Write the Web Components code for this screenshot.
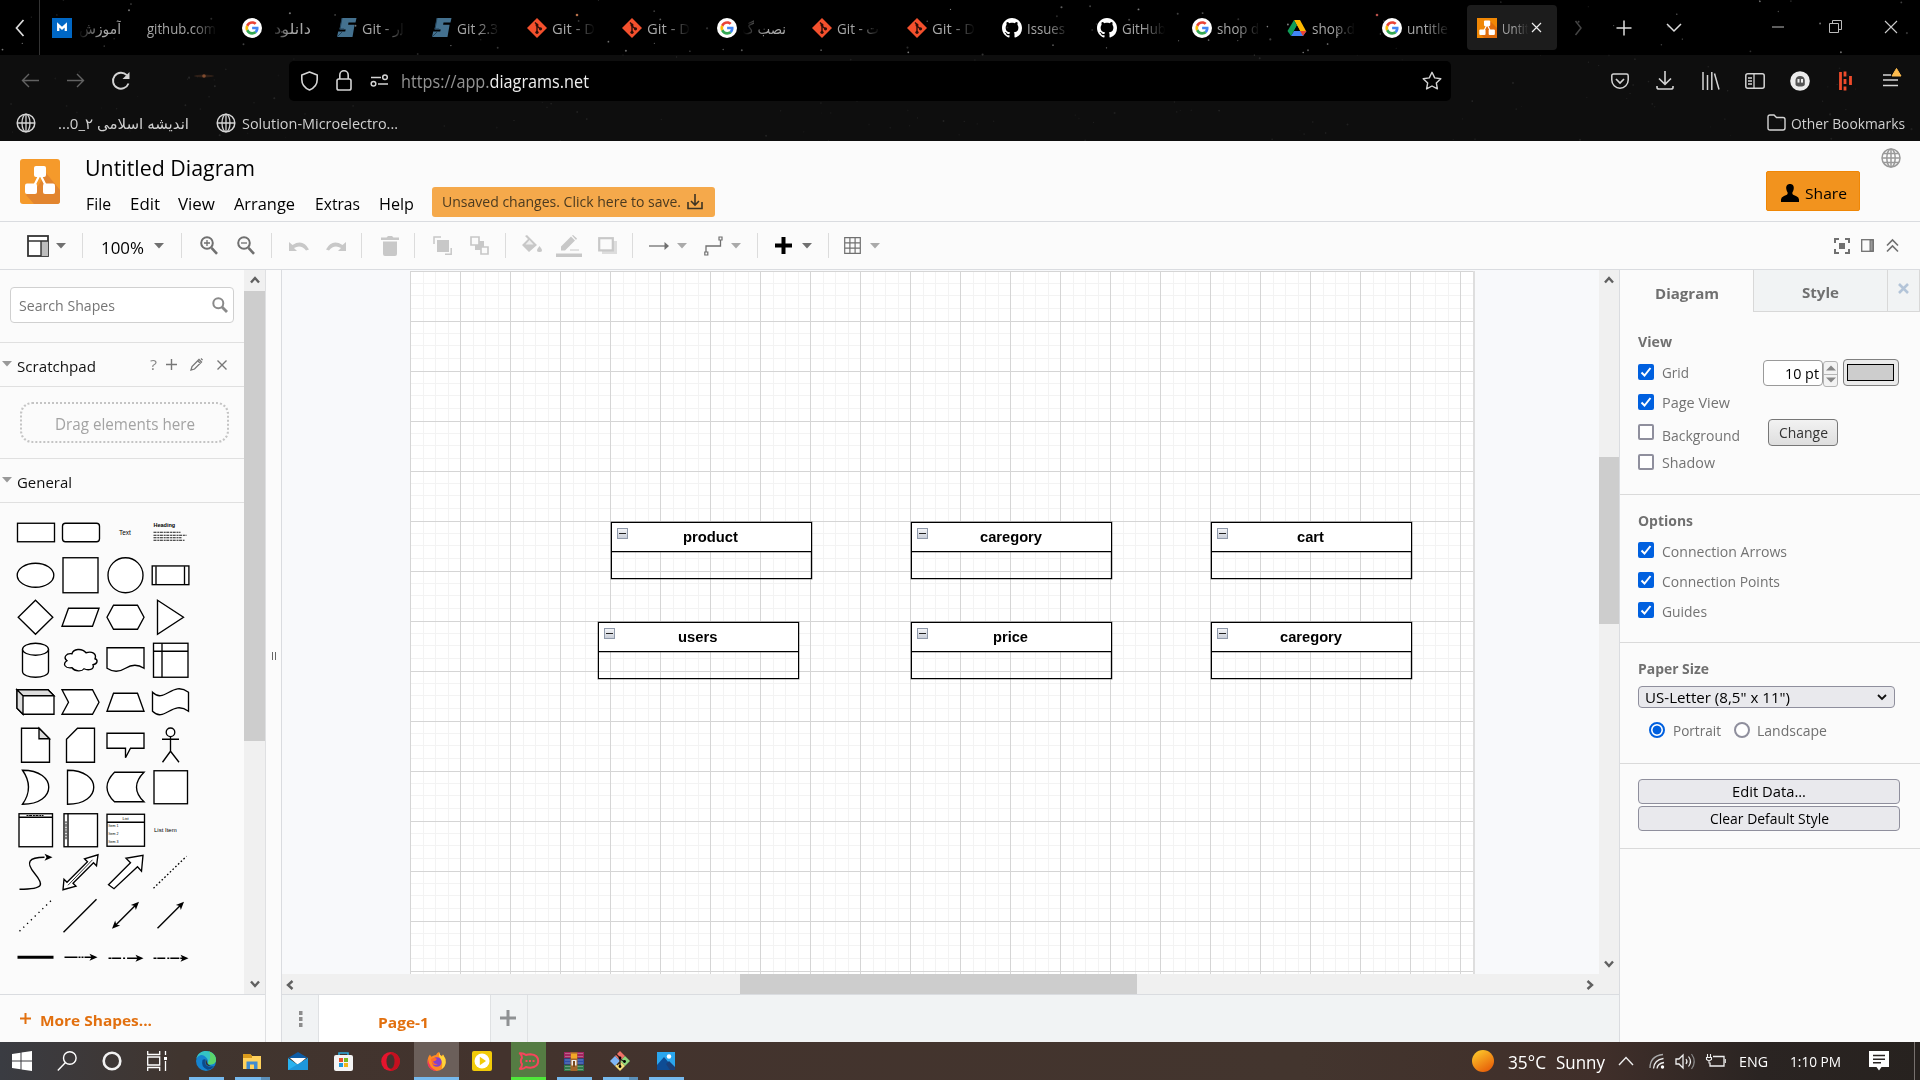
<!DOCTYPE html>
<html lang="en">
<head>
<meta charset="utf-8">
<title>Untitled Diagram</title>
<style>
html,body{margin:0;padding:0;width:1920px;height:1080px;overflow:hidden;background:#fbfbfb;font-family:"Open Sans","Noto Sans","DejaVu Sans",sans-serif}
</style>
</head>
<body>
<desktop-screen></desktop-screen>
<script>
const define = (name, css, html) => customElements.define(name, class extends HTMLElement {
  connectedCallback() {
    if (this.shadowRoot) return;
    const root = this.attachShadow({ mode: 'open' });
    root.innerHTML = `<style>*{box-sizing:border-box}${css}</style>` + (typeof html === 'function' ? html(this) : html);
  }
});

/* Text run whose advance width is pinned with the w attribute. */
customElements.define('ui-text', class extends HTMLElement {
  connectedCallback() {
    if (this.shadowRoot) return;
    const w = +this.getAttribute('w'), s = this.getAttribute('s') || 15, b = this.getAttribute('b') || 400;
    const rtl = this.hasAttribute('rtl') ? ' dir="rtl"' : '';
    this.attachShadow({ mode: 'open' }).innerHTML =
      `<style>:host{display:block;flex:none;white-space:pre;line-height:24px;height:24px;font-size:${s}px;font-weight:${b};${w ? `width:${w}px` : ''}}
      span{display:inline-block;transform-origin:0 50%}</style><span${rtl}><slot></slot></span>`;
    const el = this.shadowRoot.querySelector('span');
    const n = el.getBoundingClientRect().width;
    if (w && n) el.style.transform = `scaleX(${w / n})`;
  }
});

const G = '<circle cx="10" cy="10" r="10" fill="#fff"/><g transform="translate(3.4,3.2) scale(.28)"><path fill="#ea4335" d="M24 9.5c3.54 0 6.71 1.22 9.21 3.6l6.85-6.85C35.9 2.38 30.47 0 24 0 14.62 0 6.51 5.38 2.56 13.22l7.98 6.19C12.43 13.72 17.74 9.5 24 9.5z"/><path fill="#4285f4" d="M46.98 24.55c0-1.57-.15-3.09-.38-4.55H24v9.02h12.94c-.58 2.96-2.26 5.48-4.78 7.18l7.73 6c4.51-4.18 7.09-10.36 7.09-17.65z"/><path fill="#fbbc05" d="M10.53 28.59c-.48-1.45-.76-2.99-.76-4.59s.27-3.14.76-4.59l-7.98-6.19C.92 16.46 0 20.12 0 24c0 3.88.92 7.54 2.56 10.78l7.97-6.19z"/><path fill="#34a853" d="M24 48c6.48 0 11.93-2.13 15.89-5.81l-7.73-6c-2.15 1.45-4.92 2.3-8.16 2.3-6.26 0-11.57-4.22-13.47-9.91l-7.98 6.19C6.51 42.62 14.62 48 24 48z"/></g>';
const nodesGlyph = '<path d="M20 15L13.5 28M20 15L26.5 28" stroke="#fff" stroke-width="2.2" fill="none"/><rect x="14" y="7" width="12" height="11" rx="2" fill="#fff"/><rect x="5" y="24.5" width="12" height="10.5" rx="2" fill="#fff"/><rect x="23" y="24.5" width="12" height="10.5" rx="2" fill="#fff"/>';
const st = (c, w = 1.5) => `fill="none" stroke="${c}" stroke-width="${w}"`;
const L = '#d4d4d4', T = '#707070', K = '#c8c8c8';
/* name: [width, height, markup] */
const ICONS = {
  /* favicons */
  m: [20,20,'<rect width="20" height="20" fill="#0067c5"/><path d="M6.2 13V6.8l3.8 3.6 3.8-3.6V13" fill="none" stroke="#fff" stroke-width="2.3"/>'],
  g: [20,20,G],
  s: [20,20,'<path d="M5 0h14.500l-1 4.500h-7l-.4 2.200h6.500L15.500 19H0l1.200-5.400h7l.5-2H2.500z" fill="#44718f"/><path d="M5 0l-2 11h4M0 19l5-5" stroke="#23435a" fill="none"/>'],
  git: [20,20,'<path d="M10 0L20 10 10 20 0 10z" fill="#f4502d"/><path d="M8 4.500l2 2v7.500M10 8l3.500 3" '+st('#2b0e08',1.4)+'/><circle cx="10" cy="14.300" r="1.600" fill="#2b0e08"/><circle cx="13.500" cy="10.800" r="1.600" fill="#2b0e08"/><circle cx="10" cy="7" r="1.500" fill="#2b0e08"/>'],
  gh: [20,20,'<path transform="scale(1.25)" fill="#fff" d="M8 0C3.580 0 0 3.580 0 8c0 3.540 2.290 6.530 5.470 7.590.4.070.55-.17.55-.38 0-.19-.01-.82-.01-1.490-2.010.37-2.530-.49-2.690-.94-.09-.23-.48-.94-.82-1.130-.28-.15-.68-.52-.01-.53.63-.01 1.080.58 1.230.82.72 1.210 1.870.87 2.330.66.07-.52.28-.87.51-1.070-1.780-.2-3.640-.89-3.640-3.950 0-.87.31-1.590.82-2.150-.08-.2-.36-1.020.08-2.120 0 0 .67-.21 2.200.82.64-.18 1.320-.27 2-.27s1.360.09 2 .27c1.530-1.040 2.200-.82 2.200-.82.44 1.100.16 1.920.08 2.120.51.56.82 1.270.82 2.150 0 3.070-1.870 3.750-3.650 3.950.29.25.54.73.54 1.480 0 1.070-.01 1.930-.01 2.200 0 .21.15.46.55.38A8.010 8.010 0 0 0 16 8c0-4.420-3.580-8-8-8z"/>'],
  drive: [20,20,'<path d="M7 2h6l6 11h-6z" fill="#ffba00"/><path d="M7 2l3 5.500L4 18l-3.500-5z" fill="#0f9d58"/><path d="M4 18l3-5h12.500L16 18z" fill="#4285f4"/><path d="M16 18l-3-5h6.500z" fill="#ea4335"/><path d="M10 7.500L7 13h6z" fill="#000"/>'],
  diag: [20,20,'<rect width="20" height="20" fill="#f08705"/><path d="M13 3l7 7v10H7l-4-4 5-5z" fill="#df6c0c"/><g transform="translate(-.3,-1.2) scale(.52)">'+nodesGlyph+'</g>'],
  /* browser chrome */
  left: [10,18,`<path d="M8.500 1L1.500 9l7 8" ${st('#ddd',1.7)}/>`],
  right: [9,16,`<path d="M1.500 1L7 8l-5.500 7" ${st('#444',1.5)}/>`],
  plus: [16,16,`<path d="M8 .5v15M.5 8h15" ${st('#ddd')}/>`],
  down: [16,9,`<path d="M1 1l7 7 7-7" ${st('#ddd')}/>`],
  min: [12,2,`<path d="M0 1h12" ${st('#bbb',1)}/>`],
  restore: [13,13,`<path d="M.5 3.500h9v9h-9zM3.500 3V.5h9v9H10" ${st('#bbb',1)}/>`],
  x: [14,14,`<path d="M1 1l12 12M13 1L1 13" ${st('#ccc',1.1)}/>`],
  xs: [11,11,`<path d="M1 1l9 9M10 1l-9 9" ${st('#eee',1.2)}/>`],
  back: [18,15,`<path d="M18 7.500H1.500M8 1L1.500 7.500 8 14" ${st('#626262',1.4)}/>`],
  fwd: [18,15,`<path d="M0 7.500h16.500M10 1l6.500 6.500L10 14" ${st('#626262',1.4)}/>`],
  reload: [20,20,`<path d="M17.500 12.500a8 8 0 1 1-1.700-8.300" ${st(L,1.9)}/><path d="M18.500 1v7h-7z" fill="${L}"/>`],
  shield: [19,20,`<path d="M9.500 1l7.700 3v4.500c0 5-3 8.500-7.700 10.500-4.700-2-7.700-5.500-7.700-10.500V4z" ${st(L,1.6)} stroke-linejoin="round"/>`],
  lock: [16,21,`<rect x="1" y="9" width="14" height="11" rx="1.800" ${st(L,1.6)}/><path d="M3.800 9V5a4.200 4.200 0 0 1 8.400 0v4" ${st(L,1.6)}/>`],
  perm: [19,13,`<path d="M1 3.500h10M8 10h10" ${st(L,1.6)}/><circle cx="15" cy="3.200" r="2.300" ${st(L)}/><circle cx="3.500" cy="9.800" r="2.300" ${st(L)}/>`],
  star: [20,19,`<path d="M10 1.300l2.700 5.600 6.100.8-4.500 4.200 1.100 6L10 15l-5.400 2.900 1.100-6L1.200 7.700l6.100-.8z" ${st(L,1.4)} stroke-linejoin="round"/>`],
  pocket: [18,16,`<path d="M2.500 1h13q1.700 0 1.700 1.700V7a8.200 8.200 0 0 1-16.400 0V2.700Q.8 1 2.500 1z" ${st(L)}/><path d="M5 6l4 4 4-4" ${st(L,1.7)}/>`],
  dl: [18,19,`<path d="M9 0v13M3 7.500L9 13.300l6-5.800M1 15v1.500Q1 18 3 18h12q2 0 2-1.500V15" ${st(L,1.6)}/>`],
  lib: [18,18,`<path d="M1 0v18M5.500 3v15M9.800 0v18M12.500 1.500l4.500 16" ${st(L)}/>`],
  side: [20,16,`<rect x=".8" y=".8" width="18.400" height="14.400" rx="2" ${st(L)}/><path d="M9 1v14M3 5h4M3 8h4M3 11h4" ${st(L,1.3)}/>`],
  ghost: [20,20,'<circle cx="10" cy="10" r="9.800" fill="#ececec"/><path d="M5.500 13.500V9a4.700 4.700 0 0 1 9.300 0v4.500q-.3 2-4.600 2t-4.700-2z" fill="#555"/><rect x="7.500" y="8" width="2" height="3.600" fill="#eee"/><rect x="11" y="8" width="2" height="3.600" fill="#eee"/>'],
  red: [14,20,'<path d="M1.500 1v18M6 .5v5M6 8v5M6 15.500v4M11.500 5v9" fill="none" stroke="#ee4b2b" stroke-width="2.800"/>'],
  menu: [20,20,`<path d="M1 7h8M1 12h15M1 17.500h15" ${st(L,1.5)}/><path d="M14.500.5l4.500 7.500h-9z" fill="#ffbd4f" stroke="#ffbd4f"/>`],
  globe: [20,20,`<circle cx="10" cy="10" r="8.800" ${st(L)}/><ellipse cx="10" cy="10" rx="4" ry="8.800" ${st(L,1.3)}/><path d="M1 10h18M10 1v18" ${st(L,1.3)}/>`],
  globe2: [20,20,`<circle cx="10" cy="10" r="9" ${st('#999',1.5)}/><ellipse cx="10" cy="10" rx="4.200" ry="9" ${st('#999',1.5)}/><path d="M10 1v18M1 10h18M2.500 5.500h15M2.500 14.500h15" ${st('#999',1.5)}/>`],
  folder: [19,17,`<path d="M1 3Q1 1 3 1h4l2.500 2.500H16Q18 3.500 18 5.500v8.500q0 2-2 2H3q-2 0-2-2z" ${st(L,1.4)}/>`],
  /* editor */
  logo: [40,45,'<rect width="40" height="45" rx="3" fill="#f59a2b"/><path d="M26 14l14 17v11q0 3-3 3H14L6 36l12-9z" fill="#e2852f"/>'+nodesGlyph],
  save: [16,16,`<path d="M8 0v10.500M4 7l4 4 4-4M1 8v6.500h14V8" ${st('#3d3423',1.6)}/>`],
  person: [18,18,'<path d="M9 0c3 0 4.200 2.300 3.700 5-.3 2-1 2.600-1.400 3.700 0 1.800 1 2.300 3.700 3.200Q18 13 18 15.500V18H0v-2.500Q0 13 3 11.900c2.700-.9 3.700-1.400 3.700-3.200C6.300 7.600 5.600 7 5.300 5 4.800 2.300 6 0 9 0z"/>'],
  panel: [22,22,'<rect x="1" y="1" width="20" height="20" fill="#fff" stroke="#333" stroke-width="1.800"/><path d="M14 6h7v15h-7z" fill="#bdbdbd"/><path d="M1 6h20M14 6v15" stroke="#333" stroke-width="1.400"/>'],
  car: [10,6,'<path d="M0 0h10L5 5.500z" fill="#707070"/>'],
  carl: [10,6,'<path d="M0 0h10L5 5.500z" fill="#aaa"/>'],
  zin: [18,19,`<circle cx="7" cy="7" r="5.800" ${st(T,2)}/><path d="M11.500 11.800l5.500 6" ${st(T,2.6)}/><path d="M7 4v6M4 7h6" ${st(T,1.3)}/>`],
  zout: [18,19,`<circle cx="7" cy="7" r="5.800" ${st(T,2)}/><path d="M11.500 11.800l5.500 6" ${st(T,2.6)}/><path d="M4 7h6" ${st(T,1.3)}/>`],
  undo: [20,12,`<path d="M0 2v9h8L5 8q7-4 12 2.500l3-1Q14-1.500 3.500 5z" fill="${K}"/>`],
  redo: [20,12,`<path d="M20 2v9h-8l3-3q-7-4-12 2.500l-3-1Q6-1.500 16.500 5z" fill="${K}"/>`],
  trash: [18,20,`<path d="M0 1.500h5.500L7 0h4l1.500 1.500H18V4H0zM2 5.500h14V18q0 2-2 2H4q-2 0-2-2z" fill="${K}"/>`],
  front: [19,19,`<path d="M4 4h12v12H4z" fill="${K}"/><path d="M1 8V1h7M18.200 12v6.200H12" ${st(K,1.5)}/>`],
  bck: [19,19,`<path d="M5 5h9v9H5z" fill="${K}"/><path d="M1 1h8v8H1zM11 11h7v7h-7z" fill="#fbfbfb" stroke="${K}" stroke-width="1.700"/>`],
  fill: [20,19,`<path d="M3 1l2-1 10 10-8 7-7-7 6-6z" fill="${K}"/><path d="M3.500 9.500L7.500 5l4 4.500z" fill="#fbfbfb" opacity=".75"/><path d="M17.500 11q5 6 0 6t0-6z" fill="${K}"/>`],
  pen: [26,22,`<path d="M0 18.500h26V22H0z" fill="${K}"/><path d="M5 15.500v-4L15 1.500l4 4-10 10zM16 .5l1-.5 4 3.500-1 1.500z" fill="${K}"/><path d="M14 15h9" stroke="${K}"/>`],
  shadow: [19,17,`<path d="M4 4h15v13H4z" fill="#ddd"/><rect x="1.200" y="1.200" width="13.600" height="12.200" fill="#fbfbfb" stroke="${K}" stroke-width="2.200"/>`],
  arr: [20,8,`<path d="M0 4h16" ${st(T,1.3)}/><path d="M15.500 0l4.500 4-4.500 4z" fill="${T}"/>`],
  conn: [20,20,`<path d="M2 16v-6h14.500V4" ${st(T,1.3)}/><path d="M.8 16h3v3h-3zM15 1h3v3h-3z" ${st(T,1.2)}/>`],
  bold: [17,17,'<path d="M6.500 0h4v6.500H17v4h-6.500V17h-4v-6.500H0v-4h6.500z" fill="#000"/>'],
  grid: [17,17,`<path d="M.7.7h15.600v15.600H.7zM5.900 1v15M11.100 1v15M1 5.900h15M1 11.100h15" ${st(T,1.2)}/>`],
  fit: [16,16,`<path d="M1 5V1h4M11 1h4v4M15 11v4h-4M5 15H1v-4" ${st(T,2)}/><path d="M5 5h6v6H5z" fill="${T}"/>`],
  fmt: [13,13,`<rect x=".7" y=".7" width="11.600" height="11.600" ${st(T,1.3)}/><path d="M9 1h3v11H9z" fill="#999" stroke="${T}"/>`],
  coll: [13,13,`<path d="M1 6.500L6.500 1 12 6.500M1 12.500L6.500 7l5.500 5.500" ${st(T,1.6)}/>`],
  find: [16,16,`<circle cx="6.300" cy="6.300" r="5" ${st('#8a8a8a',2)}/><path d="M10 10l5 5" ${st('#8a8a8a',2.8)}/>`],
  tri: [10,6,'<path d="M0 0h10L5 5.500z" fill="#999"/>'],
  plus2: [11,11,`<path d="M5.500 0v11M0 5.500h11" ${st('#777',1.4)}/>`],
  pencil: [13,13,`<path d="M1 12l1-3.500L9 1.500l2.500 2.500-7 7zM8 3l2.500 2.500M11 .5l1.600 1.600" ${st('#777',1.3)}/>`],
  x2: [10,10,`<path d="M.5.5l9 9M9.500.5l-9 9" ${st('#777',1.4)}/>`],
  op: [11,11,`<path d="M5.500 0v11M0 5.500h11" ${st('#e2700f',2)}/>`],
  gp: [16,16,`<path d="M8 0v16M0 8h16" ${st('#8f9193',3)}/>`],
  dots: [4,16,'<path d="M0 0h3.500v4H0zM0 6h3.500v4H0zM0 12h3.500v4H0z" fill="#8c8c8c"/>'],
  handle: [4,8,'<path d="M.5 0v8M3.500 0v8" stroke="#666"/>'],
  su: [10,8,'<path d="M1 6.500l4-4.500 4 4.500" fill="none" stroke="#606060" stroke-width="2.400"/>'],
  sd: [10,8,'<path d="M1 1.500L5 6l4-4.500" fill="none" stroke="#606060" stroke-width="2.400"/>'],
  sl: [8,10,'<path d="M6.500 1L2 5l4.500 4" fill="none" stroke="#606060" stroke-width="2.400"/>'],
  sr: [8,10,'<path d="M1.500 1L6 5 1.500 9" fill="none" stroke="#606060" stroke-width="2.400"/>'],
  bx: [11,11,`<path d="M1 1l9 9M10 1l-9 9" ${st('#b3c4d8',2.6)}/>`],
  chev: [10,7,`<path d="M1 1l4 4 4-4" ${st('#111',1.8)}/>`],
  /* taskbar */
  win: [20,20,'<path d="M0 3l8.500-1.300v7.800H0zM9.500 1.500L20 0v9.500H9.500zM0 10.500h8.500v7.800L0 17zM9.500 10.500H20V20L9.500 18.500z" fill="#fff"/>'],
  search: [20,20,`<circle cx="12.800" cy="7" r="6.300" ${st('#fff',1.4)}/><path d="M8.500 11.500L.8 19.500" ${st('#fff',1.4)}/>`],
  cort: [20,20,`<circle cx="10" cy="10" r="8.300" ${st('#f2f2f2',2.6)}/>`],
  task: [20,20,`<path d="M.7 0v3.500h12V0M.7 20v-3.500h12V20M.7 6h12v8H.7zM18.500 0v4M18.500 10v10" ${st('#fff',1.3)}/><path d="M17 6h3v3h-3z" fill="#fff"/>`],
  edge: [20,20,'<circle cx="10" cy="10" r="10" fill="#1583cf"/><path d="M.3 8C2-3 19-2.500 20 8c.3 4-3 6-7 5.500-2-.3-1.500-1.500-1-2.500C13 8 5-1 .3 8z" fill="#35c4c4"/><path d="M13 .5c5 1.500 7.500 6 6.900 9.500-.7 3-4.500 4-7 3.300L12 12q4-6 1-11.500z" fill="#5bd66a"/><path d="M6.500 9q-2 7 5 9.800 4-.3 6.500-3.800-7 2.500-9-3-.5-2 .5-3.500-1.500-.7-3 .5z" fill="#0c4a8c"/><path d="M10 8.200Q8 13 12.500 15l4 .2q-5-.7-5.500-4.200z" fill="#3a2f2c"/>'],
  expl: [18,17,'<path d="M0 1h7l2 2h9v13H0z" fill="#ffd15c"/><path d="M0 1h7l2 2v2H0z" fill="#d99a1b"/><path d="M3.500 8.500h11V16H11v-4.500H7V16H3.500z" fill="#3f8bd0"/>'],
  mail: [20,18,'<path d="M0 6L10 0l10 6z" fill="#0d5ca5"/><path d="M2 6h16l-8 7z" fill="#fff"/><path d="M0 6l10 7 10-7v12H0z" fill="#29b2ef"/><path d="M0 18L20 6v12z" fill="#1d97dc"/>'],
  store: [19,19,'<path d="M5 3V1h9v2" fill="none" stroke="#2da9dc" stroke-width="1.600"/><rect y="3" width="19" height="16" rx="2" fill="#f4f4f4"/><path d="M5 6h4v4H5z" fill="#e8502a"/><path d="M10 6h4v4h-4z" fill="#79b821"/><path d="M5 11h4v4H5z" fill="#1c9ade"/><path d="M10 11h4v4h-4z" fill="#f4b616"/>'],
  opera: [19,19,'<ellipse cx="9.500" cy="9.500" rx="9.300" ry="9.400" fill="#e5142d"/><path d="M9.500 0Q19 1 18.800 9.500T9.500 19z" fill="#c4101f"/><ellipse cx="9.500" cy="9.500" rx="4" ry="7.300" fill="#42322e"/>'],
  ff: [19,19,'<path d="M9.500 19A9 9 0 0 1 .5 10Q.5 5 3 2.500q.5 1.500 1.500 2.200Q7 3 9 3q1-2.300 3-3 .5 3 3 4l1-1.500q3 4 2.700 8A9 9 0 0 1 9.500 19z" fill="#ff8a22"/><path d="M12 0q.5 3 3 4.500l1-2q3 4 2.700 8-.5 4-4 6.500 1.500-6-1-9.500T12 0z" fill="#ffd43a"/><path d="M1 7q1 9 9 12Q2 18.500.6 12z" fill="#f2365c"/><circle cx="9.800" cy="10" r="4.800" fill="#8540c9"/><path d="M4 7q4-2 6 0-1 2-4 2.500 1 3 5 2.500-6 3.500-7-5z" fill="#ff6a2a"/>'],
  play: [20,20,'<rect width="20" height="20" rx="2" fill="#f2cb08"/><circle cx="10" cy="10" r="7.500" fill="#fff"/><path d="M7.800 5.800L14 10l-6.200 4.200z" fill="#f2cb08"/>'],
  rocket: [20,18,`<path d="M.8 1.200Q4.500.8 7 3q2-.7 4.500-.7Q19.200 3 19.200 9t-7.700 6.700Q9 15.700 7 15q-2.500 2.300-6.200 1.800Q3.300 14.500 3 12.200 1.800 10.800 1.800 9T3 5.800Q3.300 3.500.8 1.200z" ${st('#f5455c',2)} stroke-linejoin="round"/><path d="M6.500 8h2v2h-2zM10 8h2v2h-2zM13.500 8h2v2h-2z" fill="#f5455c"/>`],
  rar: [20,19,'<path d="M0 0h20v6H0z" fill="#a3245f"/><path d="M0 6.500h20v6H0z" fill="#2c4fa8"/><path d="M0 13h20v6H0z" fill="#2f7a4a"/><path d="M1 1.500h18M1 8h18M1 14.500h18M1 4.500h18M1 11h18M1 17.500h18" stroke="#ddd" stroke-width=".7" opacity=".5"/><path d="M6.500 0h7v19h-7z" fill="#a3652c"/><path d="M7 1.500h6v5H7z" fill="#f2a927"/><path d="M7.500 8h5v5.500h-5z" fill="#eee"/><path d="M9 9h2v6H9z" fill="#7b4a1f"/>'],
  gitb: [20,20,'<path d="M10 0l5 5-5 5-5-5z" fill="#f07167"/><path d="M15 5l5 5-5 5-5-5z" fill="#8fd67c"/><path d="M5 5l5 5-5 5-5-5z" fill="#7fb5f5"/><path d="M10 10l5 5-5 5-5-5z" fill="#f5dc7a"/><path d="M6 3l4 4v9M10 8l5 3M10 11l-3 3" stroke="#2d2320" stroke-width="1.300" fill="none"/><circle cx="10" cy="7" r="1.400"/><circle cx="14.500" cy="10.500" r="1.400"/><circle cx="10" cy="15.500" r="1.400"/>'],
  photo: [18,18,'<path d="M0 0h18v18H0z" fill="#2aa6ee"/><path d="M0 13l7-8 11 13H0z" fill="#0e4c94"/><path d="M9 12l3-3 6 6v3h-5z" fill="#1a3f78"/><circle cx="12" cy="4.500" r="2.200" fill="#fff"/>'],
  sun: [22,22,'<defs><linearGradient id="sg" x1="0" y1="0" x2=".6" y2="1"><stop offset="0" stop-color="#ffd22e"/><stop offset="1" stop-color="#e8630a"/></linearGradient></defs><circle cx="11" cy="11" r="11" fill="url(#sg)"/>'],
  up: [16,10,`<path d="M1 9l7-7.500L15 9" ${st('#eee',1.4)}/>`],
  wifi: [16,16,`<path d="M1 15Q1 3 14 1.500" ${st('#aaa',1.3)}/><path d="M4.500 15.500Q5 7 14.500 5.500M8 15.500q.5-5 7-6" ${st('#eee',1.3)}/><circle cx="13.500" cy="14" r="1.700" fill="#fff"/>`],
  snd: [21,17,`<path d="M1 6h3l4-4v13l-4-4H1z" ${st('#eee',1.3)}/><path d="M11 6q2 2.500 0 5M13.500 3.500q4 5 0 10" ${st('#eee',1.2)}/><path d="M16.500 1q5.500 7.500 0 15" ${st('#888',1.2)}/>`],
  bat: [20,14,`<path d="M7 2.500h11v9.500H4V8.500" ${st('#eee',1.3)}/><path d="M19.300 5v4M1.500 0v3M4.500 0v3M.5 3.500h5v2l-2.500 1.500L.5 5.500zM3 7v2.500" ${st('#eee',1.1)}/>`],
  note: [20,20,'<path d="M0 0h20v16h-7.500L10 19.500 7.500 16H0z" fill="#fff"/><path d="M4 4.500h12M4 8.200h12M4 11.800h8" stroke="#2a2523" stroke-width="1.400"/>']
};
define('ui-icon', ':host{display:block;flex:none;line-height:0}svg{display:block;overflow:visible}', el => {
  const [w, h, m] = ICONS[el.getAttribute('name')];
  return `<svg width="${w}" height="${h}" viewBox="0 0 ${w} ${h}">${m}</svg>`;
});

/* Lays out [start, width, markup, vertical nudge] items along a flex row. */
const run = (origin, items) => {
  let p = origin;
  return items.map(([x, w, m, dy = 0]) => {
    const s = `<div style="flex:none;width:${w}px;margin-left:${+(x - p).toFixed(2)}px;padding-top:${Math.max(0, dy) * 2}px;padding-bottom:${Math.max(0, -dy) * 2}px">${m}</div>`;
    p = x + w; return s;
  }).join('');
};
const ic = n => `<ui-icon name="${n}"></ui-icon>`;
const icon = (x, n, dy) => [x, ICONS[n][0], ic(n), dy];
const txt = (x, w, t, s = 15, b = 400, dy = 0, rtl = '') => [x, w, `<ui-text w="${w}" s="${s}" b="${b}" ${rtl}>${t}</ui-text>`, dy];

/* Browser */
define('star-field', ':host{display:block;position:absolute;inset:0;pointer-events:none}svg{display:block}', () => {
  let r = 11; const rnd = () => (r = (r * 16807) % 2147483647) / 2147483647;
  let s = '';
  for (let i = 0; i < 260; i++) {
    const y = rnd() * 141, o = y < 55 ? .12 + rnd() * .4 : .03 + rnd() * .08;
    s += `<circle cx="${(rnd() * 1920).toFixed(1)}" cy="${y.toFixed(1)}" r="${(.5 + rnd() * .6).toFixed(2)}" fill="#fff" opacity="${o.toFixed(2)}"/>`;
  }
  return `<svg width="1920" height="141">${s}<ellipse cx="204" cy="76" rx="10" ry="1.500" fill="#a5603a" opacity=".22"/><circle cx="204" cy="76" r="1.800" fill="#a5603a" opacity=".7"/><circle cx="577" cy="15" r="1.300" fill="#b5704a"/><circle cx="1377" cy="15" r="1.300" fill="#b5504a"/></svg>`;
});
define('browser-tab', `:host{display:block;flex:none;width:95px;height:45px;color:#a6a6a6}
  .t{display:flex;align-items:center;height:45px;margin:0 3px 0 2px;padding-left:10px;border-radius:4px}
  :host([active]) .t{background:#1c1c1c}
  .l{width:44px;margin-left:5px;overflow:hidden;display:flex;-webkit-mask-image:linear-gradient(90deg,#000 45%,transparent 98%);mask-image:linear-gradient(90deg,#000 45%,transparent 98%)}
  .l.wide{width:70px;margin-left:0;-webkit-mask-image:linear-gradient(90deg,#000 65%,transparent 100%);mask-image:linear-gradient(90deg,#000 65%,transparent 100%)}
  .l.rtl{justify-content:flex-end;-webkit-mask-image:linear-gradient(270deg,#000 45%,transparent 98%);mask-image:linear-gradient(270deg,#000 45%,transparent 98%)}
  :host([active]) .l{width:27px}
  ui-icon[name=xs]{margin-left:2px}`, el => {
  const i = el.getAttribute('icon'), rtl = el.hasAttribute('rtl');
  return `<div class="t">${i ? ic(i) : ''}<div class="l ${i ? '' : 'wide'} ${rtl ? 'rtl' : ''}"><ui-text s="15" w="${el.getAttribute('w')}" ${rtl ? 'rtl' : ''}>${el.getAttribute('label')}</ui-text></div>${el.hasAttribute('active') ? ic('xs') : ''}</div>`;
});
const TABS = [['m','آموزش',42,'rtl'],['','github.com',69],['g','دانلود',37,'rtl'],['s','Git - ار',42],['s','Git 2.3',41],['git','Git - D',43],['git','Git - D',43],['g','نصب گ',44,'rtl'],['git','Git - ت',42],['git','Git - D',43],['gh','Issues',38],['gh','GitHub',44],['g','shop d',42],['drive','shop.d',43],['g','untitle',41],['diag','Untit',27,'active']];
define('browser-chrome', `:host{display:block;position:relative;height:141px;background:#0e0e0e;color:#d0d0d0}
  .r{display:flex;align-items:center;position:relative}
  .tabs{height:55px}.first{width:40px;height:55px;border-right:1px solid #333;display:flex;align-items:center;padding-left:15px;flex:none}
  .nav{height:51px}.url{display:flex;align-items:center;height:40px;width:1162px;border-radius:5px;background:#000}
  .bm{height:34px}`, `<div style="background:#000;height:55px"></div><star-field></star-field>
  <div style="margin-top:-55px"><div class="r tabs"><div class="first">${ic('left')}</div>${TABS.map(t => `<browser-tab icon="${t[0]}" label="${t[1]}" w="${t[2]}" ${t[3] || ''}></browser-tab>`).join('')}
  ${run(1560, [icon(1574,'right'),icon(1615.5,'plus'),icon(1666,'down'),icon(1772,'min',-1),icon(1829,'restore',-1),icon(1884,'x',-1)])}</div>
  <div class="r nav">${run(0, [icon(21,'back'),icon(66.5,'fwd'),icon(111,'reload'),
    [289,1162,`<div class="url">${run(289,[icon(299.5,'shield'),icon(336,'lock'),icon(369.5,'perm'),[401,188,'<ui-text s="17.500" w="188"><span style="color:#939393">https://app.</span><span style="color:#eee">diagrams.net</span></ui-text>',.5],icon(1422,'star')])}</div>`],
    icon(1611,'pocket'),icon(1655.5,'dl',-.5),icon(1702,'lib'),icon(1745,'side'),icon(1790,'ghost'),icon(1838.5,'red'),icon(1882,'menu',-3)])}</div>
  <div class="r bm">${run(0, [icon(15.5,'globe'),txt(57.5,131,'اندیشه اسلامی ٢_0...',15,400,0,'rtl'),icon(215.5,'globe'),txt(242,156,'Solution-Microelectro...'),icon(1767,'folder',-.5),txt(1791,114,'Other Bookmarks')])}</div></div>`);

/* Editor header */
define('save-notice', ':host{display:flex;width:283px;height:30px;background:#f5a94b;border-radius:3px;align-items:center;color:#4a3a20}', run(0, [txt(10,239,'Unsaved changes. Click here to save.',14.5),icon(255,'save')]));
define('share-button', ':host{display:flex;width:94px;height:40px;background:#f2931e;border:1px solid #f08705;border-radius:2px;align-items:center;color:#000}', run(0, [icon(14,'person',1.5),txt(38,42,'Share',15,400,1.5)]));
define('editor-header', `:host{display:flex;height:81px;border-bottom:1px solid #dadce0;background:#fbfbfb;color:#000}
  .logo{margin:18px 0 0 20px}.mid{margin-left:25px;width:1681px}.title{height:41px;padding-top:14px}.menu{display:flex;align-items:center;height:38px;margin-top:2px}
  .end{display:flex;flex-direction:column}.end ui-icon{margin:7px 0 0 115px}.end share-button{margin-top:3px}`,
  `<ui-icon class="logo" name="logo"></ui-icon><div class="mid"><div class="title"><ui-text s="22" w="170">Untitled Diagram</ui-text></div>
  <div class="menu">${run(85,[txt(86,25,'File',17,400,.5),txt(130,30,'Edit',17,400,.5),txt(178,37,'View',17,400,.5),txt(234,61,'Arrange',17,400,.5),txt(314.500,45,'Extras',17,400,.5),txt(379,35,'Help',17,400,.5),[432,283,'<save-notice></save-notice>',-1]])}</div></div>
  <div class="end"><ui-icon name="globe2"></ui-icon><share-button></share-button></div>`);

/* Toolbar */
const sep = x => [x,1,'<div style="height:25px;background:#dcdcdc"></div>',0];
define('editor-toolbar', `:host{display:flex;align-items:center;height:48px;border-bottom:1px solid #dadce0;background:#fbfbfb;color:#000}`,
  run(0,[icon(27,'panel'),icon(56,'car'),sep(82),txt(101,43,'100%',17,400,2.5),icon(154,'car'),sep(181),icon(200,'zin'),icon(237,'zout'),sep(271),icon(289,'undo'),icon(326,'redo'),sep(361),icon(380.500,'trash'),sep(414),icon(433,'front'),icon(469.500,'bck'),sep(505),icon(522,'fill',-1),icon(556,'pen'),icon(598,'shadow'),sep(632),icon(649,'arr'),icon(676.500,'carl'),icon(704,'conn'),icon(731,'carl'),sep(757),icon(775,'bold'),icon(801.500,'car'),sep(828),icon(843.500,'grid'),icon(870,'carl'),icon(1834,'fit'),icon(1860.500,'fmt'),icon(1886,'coll')]));

/* Shape palette */
const arrowHead = (x, y, a) => `<path transform="translate(${x},${y}) rotate(${a})" d="M0 0l-8 3.500 2-3.500-2-3.500z" fill="#000" stroke="none"/>`;
const tt = (x, y, s, t, a = '') => `<text x="${x}" y="${y}" font-size="${s}" fill="#000" stroke="none" font-family="Liberation Sans" ${a}>${t}</text>`;
const SHAPES = [
  '<rect x="-18" y="-9" width="37" height="18.500"/>','<rect x="-18" y="-9" width="37" height="18.500" rx="3"/>', tt(-6.5,2.5,6.5,'Text'), tt(-17,-5,5.5,'Heading','font-weight="700"') + '<path d="M-17 0h27M-17 3h33M-17 5.500h28M-17 8h31" stroke-width=".9" stroke-dasharray="3 .8 2 .6"/>',
  '<ellipse rx="18.300" ry="12"/>','<rect x="-17.500" y="-17.500" width="35" height="35"/>','<circle r="17.500"/>','<rect x="-18.300" y="-9.300" width="36.700" height="18.700"/><path d="M-14.500-9v18M14-9v18"/>',
  '<path d="M0-17L17.300 0 0 17-17.300 0z"/>','<path d="M-12-9h30.500L12 9h-30.500z"/>','<path d="M-12-12h24l6.500 12L12 12h-24L-18.500 0z"/>','<path d="M-13-17L13 0-13 17z"/>',
  '<path d="M-13-11V11c0 8 26 8 26 0v-22"/><ellipse cy="-11" rx="13" ry="6"/>','<path transform="translate(.5 -.5)" d="M-9-6c-6-1-9 4-5 7-5 3-2 8 5 7 3 4 10 4 12 1 4 2 11 1 9-4 5-1 5-5 2-6 2-5-3-8-9-6-4-5-13-4-14 1z"/>','<path d="M-18.500-12.500h37V8q-9-6-18.500 0T-18.500 8z"/>','<rect x="-17" y="-17" width="34.500" height="34"/><path d="M-8.500-17v34M-17-9h34.500"/>',
  '<path d="M-18.500-12.500h31l6 6v18.500h-31l-6-6z"/><path d="M-18.500-12.500l6 6V12l-6-6zM-18.500-12.500h31l6 6h-31z" fill="#ddd"/>','<path d="M-18.500-12.500H12L18.500 0 12 12h-30.500l6.500-12z"/>','<path d="M-12-9h24l6.500 18h-37z"/>','<path d="M-18-10c12 12 20-12 36 0v19c-16-12-24 12-36 0z"/>',
  '<path d="M-14-17H3.500L14-6.500V17h-28z"/><path d="M3.500-17v10.500H14z" fill="#ddd"/>','<path d="M-3-17h17v34h-28V-6z"/>','<path d="M-18.500-12h37V3H5l-5 9.500V3h-18.500z"/>','<circle cy="-13" r="4.300"/><path d="M0-8.500V6M-8.500-6h17M-8 17L0 6l8.500 11"/>',
  '<path d="M-13-17c35 0 35 34 0 34q12-17 0-34z"/>','<path d="M-13-17c35 0 35 34 0 34z"/>','<path d="M-11-15h29.500q-15 15 0 29.500H-11Q-26 0-11-15z"/>','<rect x="-16.500" y="-16.500" width="33.500" height="33"/>',
  '<rect x="-16.500" y="-16.500" width="33.500" height="33"/><path d="M-16.500-13h33.500"/><path d="M-9-14.700H8" stroke-width="1" stroke-dasharray="2 .6 3 .8"/>','<rect x="-16.500" y="-16.500" width="33.500" height="33"/><path d="M-12.500-16.500v33"/><path d="M-14.500-9v18" stroke-width="1" stroke-dasharray="2 .6 3 .8"/>','<rect x="-18.500" y="-16" width="37.500" height="32"/><path d="M-18.500-8h37.500"/>'+tt(-3,-10.500,4,'List')+tt(-17,-3,3.6,'Item 1')+tt(-17,5,3.6,'Item 2')+tt(-17,13,3.6,'Item 3'),tt(-16.500,2,6,'List Item'),
  '<path d="M-16 17c26 0 24-5 15-16s-6-16 10-16" fill="none"/>'+arrowHead(17,-15,0),'<path d="M-17.500 17.500l1-10.500 3 3L7-10.500l-3-3 13.500-4-1.500 11-3-3L-7.500 11l3 3z"/><path d="M-12.500 13L12-12.500" stroke-width=".8"/>','<path d="M-17 12.500L5-9.500 .5-14 17.500-17l-1.500 16-4-4.500-23.500 22z"/>','<path d="M-17 16L16-16" stroke-dasharray="1.600 2.200"/>',
  '<path d="M-16 16L16-15" stroke-dasharray="1.300 4"/>','<path d="M-17 17L16-16"/>','<path d="M-11 11L11-11"/>'+arrowHead(13.5,-13.5,-45)+arrowHead(-13.5,13.5,135),'<path d="M-13 13L11-11"/>'+arrowHead(13.5,-13.5,-45),
  '<path d="M-18 0h36" stroke-width="3"/>','<path d="M-16 0h30" stroke-dasharray="13 1 2 1 2 1 20"/>'+arrowHead(17,0,0),'<path d="M-17 1h31" stroke-dasharray="3 .6 9 2 2 2 20"/>'+arrowHead(18,1,0),'<path d="M-17 1h31" stroke-dasharray="3 .8 8 2 2 1 9 1"/>'+arrowHead(18,1,0)
];
define('palette-shape', ':host{display:block;width:45px;height:42.500px}svg{display:block}', el => {
  const i = +el.getAttribute('index');
  return `<svg width="45" height="42.500" viewBox="-22.500 -21.250 45 42.500" fill="#fff" stroke="#000" stroke-width="1.350">${SHAPES[i]}</svg>`;
});
define('palette-title', `:host{display:flex;align-items:center;height:45px;border-top:1px solid #e0e0e0;border-bottom:1px solid #e0e0e0;color:#111}`,
  el => run(0,[icon(2,'tri',-1),txt(17,+el.getAttribute('w'),el.getAttribute('label'),15,400,1), ...(el.hasAttribute('tools') ? [[150,8,'<ui-text s="14" w="7" style="color:#888">?</ui-text>',.5],icon(166,'plus2'),icon(190,'pencil'),icon(216.500,'x2')] : [])]));
define('scroll-bar', `:host{display:flex;flex:none;background:#f0f0f0;flex-direction:column;align-items:center;width:var(--t,21px)}
  :host([h]){flex-direction:row;width:auto;height:20px}.b{display:flex;align-items:center;justify-content:center;width:100%;height:21px;flex:none}
  :host([h]) .b{width:16px;height:100%;padding-top:1px}:host(:not([h])) .b:first-of-type{padding-bottom:2px}.th{background:#cdcdcd;width:100%;flex:none}:host([h]) .th{height:100%}.g{flex:1}`, el => {
  const h = el.hasAttribute('h'), [a, n] = el.getAttribute('thumb').split(' ');
  return `<div class="b">${ic(h ? 'sl' : 'su')}</div><div class="th" style="${h ? `margin-left:${a}px;width:${n}px` : `margin-top:${a}px;height:${n}px`}"></div><div class="g"></div><div class="b">${ic(h ? 'sr' : 'sd')}</div>`;
});
define('shape-sidebar', `:host{display:flex;flex-direction:column;width:266px;flex:none;border-right:1px solid #dfe0e2;background:#fbfbfb}
  .top{display:flex;height:724px}.list{width:244px}.search{display:flex;align-items:center;margin:17px 0 19px 10px;width:224px;height:36px;border:1px solid #d0d0d0;border-radius:4px;background:#fff;color:#757575}
  .drop{margin:15px 0 15px 20px;width:209px;height:41px;border:2px dotted #c4c4c4;border-radius:12px;display:flex;align-items:center;justify-content:center;color:#a3a3a3}
  .shapes{display:flex;flex-wrap:wrap;width:181px;margin:8px 0 0 13px}.more{display:flex;align-items:center;border-top:1px solid #dadce0;height:48px;color:#e2700f}`,
  `<div class="top"><div class="list"><div class="search">${run(0,[txt(8,96,'Search Shapes'),icon(200.500,'find',-.5)])}</div>
  <palette-title label="Scratchpad" w="79" tools></palette-title><div class="drop"><ui-text s="15.500" w="140" style="padding-top:1px">Drag elements here</ui-text></div>
  <palette-title label="General" w="55"></palette-title><div class="shapes">${SHAPES.map((_, i) => `<palette-shape index="${i}"></palette-shape>`).join('')}</div></div>
  <scroll-bar thumb="0 450"></scroll-bar></div><div class="more">${run(0,[icon(20,'op',0),txt(40,112,'More Shapes...',15,700,1)])}</div>`);

/* Canvas */
define('list-node', `:host{display:block;position:absolute;width:201px;height:57px;border:1px solid #000;box-shadow:0 0 0 .5px rgba(0,0,0,.45);font-family:"Liberation Sans",sans-serif;color:#000}
  .h{display:flex;height:29px;border-bottom:1px solid #000;background:#fff;padding:5px 0 0 5px;box-shadow:0 1px 0 rgba(0,0,0,.25)}
  .h i{display:block;width:11px;height:11px;border:1px solid #8f99aa;background:linear-gradient(#f4f5f8,#c9ced8);flex:none}.h i::after{content:"";display:block;width:7px;height:1px;margin:4px 1px;background:#222}
  .n{flex:1;display:flex;justify-content:center;margin:-3px 18px 0 0}`,
  el => `<div class="h"><i></i><div class="n"><ui-text s="15" b="700" w="${el.getAttribute('w')}"><slot></slot>${el.getAttribute('label')}</ui-text></div></div>`);
define('diagram-page', ':host{display:block;position:relative;width:1065px;height:703px;background:#fff;margin-left:128px;overflow:hidden;border-right:2px solid #dedede}svg{display:block}', () => {
  let a = '', b = '';
  for (let i = 0; i < 86; i++) { const p = Math.round(i * 12.5); i % 4 ? b += `M${p + .5} 0V703` : a += `M${p + .5} 0V703`; }
  for (let i = 0; i < 57; i++) { const p = Math.round(i * 12.5); i % 4 ? b += `M0 ${p - .5}H1063` : a += `M0 ${p + .5}H1063`; }
  const N = [[201,251,'product',55],[501,251,'caregory',62],[801,251,'cart',27],[188,351,'users',39.5],[501,351,'price',35],[801,351,'caregory',62]];
  return `<svg width="1063" height="703"><path d="${b}" stroke="#f3f3f3"/><path d="${a}" stroke="#d5d5d5"/></svg>` + N.map(n => `<list-node style="left:${n[0]}px;top:${n[1]}px" label="${n[2]}" w="${n[3]}"></list-node>`).join('');
});
define('page-tabs', `:host{display:flex;height:48px;border-top:1px solid #dadce0;background:#f1f3f4}
  .d{width:37px;border-right:1px solid #dfe1e3;display:flex;align-items:center;justify-content:center;padding:1px 0 0 1px}.p{width:171px;background:#fff;display:flex;align-items:center;padding:7px 0 0 59px;color:#e2700f}
  .a{width:38px;border-right:1px solid #dfe1e3;border-left:1px solid #dfe1e3;display:flex;justify-content:center;padding:15px 2px 0 0}`,
  `<div class="d">${ic('dots')}</div><div class="p"><ui-text w="51" b="700">Page-1</ui-text></div><div class="a">${ic('gp')}</div>`);
define('diagram-area', `:host{display:flex;flex-direction:column;width:1339px;border-left:1px solid #dadce0;border-right:1px solid #dadce0;flex:none}
  .v{display:flex;height:704px;background:#f8f9fb}.c{width:1317px;overflow:hidden;padding-top:1px}`,
  `<div class="v"><div class="c"><diagram-page></diagram-page></div><scroll-bar style="--t:20px" thumb="166 167"></scroll-bar></div><div style="display:flex;background:#f0f0f0"><scroll-bar h thumb="442 397" style="width:1316px"></scroll-bar></div><page-tabs></page-tabs>`);

/* Format panel */
define('check-row', `:host{display:flex;align-items:center;height:16px;color:#737373}.b{width:16px;height:16px;border:2px solid #8f8f9d;border-radius:2px;background:#fff;flex:none}
  :host([on]) .b{background:#0060df;border-color:#0060df}svg{display:block;width:12px;height:12px}ui-text{margin-left:8px}`,
  el => `<div class="b">${el.hasAttribute('on') ? '<svg viewBox="0 0 12 12"><path d="M1.500 6.500l3 3 6-7.500" fill="none" stroke="#fff" stroke-width="2"/></svg>' : ''}</div><ui-text w="${el.getAttribute('w')}" style="padding-top:${el.getAttribute('dy') || 0}px"><slot></slot>${el.getAttribute('label')}</ui-text>`);
define('push-button', `:host{display:flex;align-items:center;justify-content:center;border:1px solid #8f8f9d;border-radius:4px;background:#e9e9ed;height:25px;color:#000}ui-text{margin-top:-1px}`, el => `<ui-text w="${el.getAttribute('w')}">${el.getAttribute('label')}</ui-text>`);
define('format-panel', `:host{display:block;flex:1;background:#fbfbfb;color:#707070}
  .tabs{display:flex;height:42px}.tab{display:flex;align-items:center;justify-content:center}.t2{background:#f1f3f4;border-left:1px solid #d8d8d8;border-bottom:1px solid #d8d8d8}
  section{padding-left:18px;border-bottom:1px solid #dadada;display:flex;flex-direction:column}
  .line{display:flex;align-items:flex-start;height:30px}
  .inp{width:60px;height:26px;border:1px solid #9a9a9a;border-radius:4px;background:#fff;color:#000;display:flex;align-items:center;padding-left:21px}
  .spin{width:15px;height:26px;margin-top:1px;border:1px solid #b5b5b5;border-radius:3px;display:flex;flex-direction:column;background:#f3f3f3}.spin div{flex:1;display:flex;align-items:center;justify-content:center}.spin div+div{border-top:1px solid #b5b5b5}
  .col{width:56px;height:27px;margin:-1px 0 0 5px;border:1px solid #808080;border-radius:4px;background:#eaeaea;padding:4px 4px 4px 3px}.col div{height:17px;border:1px solid #000;background:#cdcdcd}
  .sel{display:flex;align-items:center;justify-content:space-between;width:257px;height:22px;border:1px solid #8f8f9d;border-radius:4px;background:#e9e9ed;color:#000;padding:0 7px 0 6px}
  .rad{width:16px;height:16px;border:2px solid #8f8f9d;border-radius:50%;background:#fff}.on{border-color:#0060df;background:radial-gradient(circle,#0060df 4px,#fff 4.800px)}
  .ch{width:70px;height:27px;background:linear-gradient(#f2f2f2,#dedede);border-color:#777;color:#333}`,
  `<div class="tabs"><div class="tab" style="width:133px;padding-top:3px"><ui-text b="700" w="64">Diagram</ui-text></div><div class="tab t2" style="width:134px;padding-top:2px"><ui-text b="700" w="37">Style</ui-text></div><div class="tab t2" style="flex:1;padding-bottom:4px;border-right:1px solid #d8d8d8">${ic('bx')}</div></div>
  <section style="height:183px;padding-top:17px"><ui-text b="700" w="34" style="margin-bottom:11px">View</ui-text>
   <div class="line"><check-row on label="Grid" w="27" style="width:125px"></check-row><div style="display:flex;margin-top:-4px"><div class="inp"><ui-text w="34">10 pt</ui-text></div><div class="spin"><div><svg width="10" height="6"><path d="M0 5.500h10L5 .5z" fill="#888"/></svg></div><div><svg width="10" height="6"><path d="M0 .5h10L5 5.500z" fill="#888"/></svg></div></div><div class="col"><div></div></div></div></div>
   <div class="line"><check-row on label="Page View" w="68"></check-row></div>
   <div class="line"><check-row label="Background" w="78" dy="2.500" style="width:130px"></check-row><push-button class="ch" label="Change" w="49" style="margin-top:-5px"></push-button></div>
   <div class="line"><check-row label="Shadow" w="53" dy="0"></check-row></div></section>
  <section style="height:148px;padding-top:13px"><ui-text b="700" w="55" style="margin-bottom:10px">Options</ui-text>
   <div class="line"><check-row on label="Connection Arrows" w="125" dy="1"></check-row></div><div class="line"><check-row on label="Connection Points" w="118" dy="1"></check-row></div><div class="line"><check-row on label="Guides" w="45" dy="1"></check-row></div></section>
  <section style="height:121px;padding-top:13px"><ui-text b="700" w="71" style="margin-bottom:6px">Paper Size</ui-text>
   <div class="sel"><ui-text w="145">US-Letter (8,5" x 11")</ui-text>${ic('chev')}</div>
   <div style="display:flex;align-items:center;height:16px;margin-top:14px">${run(0,[[11,16,'<div class="rad on"></div>'],txt(35,48,'Portrait',15,400,-.5),[96,16,'<div class="rad"></div>'],txt(119,70,'Landscape',15,400,-.5)])}</div></section>
  <section style="height:85px;padding-top:15px;gap:2px"><push-button label="Edit Data..." w="74" style="width:262px"></push-button><push-button label="Clear Default Style" w="119" style="width:262px"></push-button></section>`);

/* Taskbar */
define('task-button', `:host{display:flex;flex:none;height:38px;align-items:center;justify-content:center;border-bottom:3px solid transparent;padding-top:3px}
  :host([run]){border-bottom-color:#76b9ed}`, el => ic(el.getAttribute('icon')));
const tb = (x, w, i, extra = '') => [x, w, `<task-button icon="${i}" ${extra}></task-button>`];
define('task-bar', `:host{display:flex;align-items:center;height:38px;background:linear-gradient(90deg,#3a3c42 0,#40352f 180px,#43332d 500px,#43352e 1300px,#402f2a 1600px,#2a2422 1760px,#27221f 1920px);color:#fff}`,
  run(0,[tb(2,40,'win'),tb(47,40,'search'),tb(91,41,'cort'),tb(137,40,'task'),tb(188.5,35,'edge','run'),tb(234.5,35,'expl','run style="border-image:linear-gradient(90deg,#76b9ed 70%,#5b8fb8 70%) 3"'),tb(280,36,'mail'),tb(326,35,'store'),tb(373,35,'opera'),tb(414,45,'ff','run style="background:#6b5f5a"'),tb(464.5,35,'play'),tb(511,35,'rocket','run style="background:#557c43;border-color:#4fe83a"'),tb(556.5,35,'rar','run'),tb(602.5,35,'gitb','run style="border-image:linear-gradient(90deg,#76b9ed 70%,#5b8fb8 70%) 3"'),tb(648.5,35,'photo','run'),
   icon(1472,'sun'),txt(1508,38,'35°C',17.5,400,1),txt(1556,49,'Sunny',17.5,400,1),icon(1618,'up'),icon(1649,'wifi'),icon(1675,'snd'),icon(1706,'bat'),txt(1739,29,'ENG',15),txt(1790,51,'1:10 PM',15),icon(1869,'note'),[1914,1,'<div style="height:38px;background:#77716e"></div>']]));

define('desktop-screen', `:host{display:flex;flex-direction:column;width:1920px;height:1080px;overflow:hidden;background:#fbfbfb}
  .work{display:flex;height:772px}.split{width:15px;flex:none;display:flex;justify-content:center;padding:382px 0 0 1px;background:#fbfbfb}`,
  `<browser-chrome></browser-chrome><editor-header></editor-header><editor-toolbar></editor-toolbar>
  <div class="work"><shape-sidebar></shape-sidebar><div class="split">${ic('handle')}</div><diagram-area></diagram-area><format-panel></format-panel></div><task-bar></task-bar>`);
</script>
</body>
</html>
